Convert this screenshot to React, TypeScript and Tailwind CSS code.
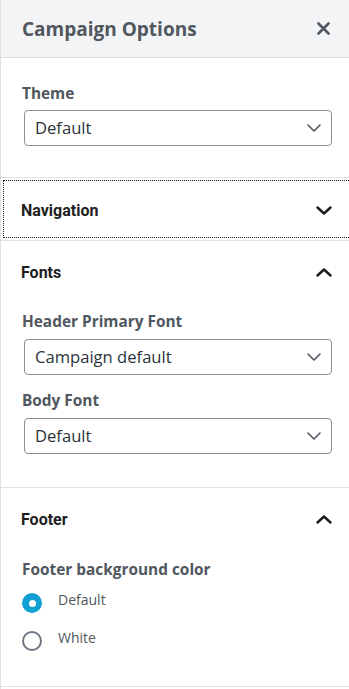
import React from "react";

const sans = { fontFamily: '"Open Sans", "Noto Sans", sans-serif' };
const heading = { fontFamily: 'Roboto, "Liberation Sans", sans-serif' };

function SelectChevron() {
  return (
    <svg width="14" height="8" viewBox="0 0 14 8" fill="none" className="shrink-0">
      <path d="M1 1l6 6 6-6" stroke="#50575e" strokeWidth="1.6" strokeLinecap="round" strokeLinejoin="round" />
    </svg>
  );
}

function Chevron({ up }: { up?: boolean }) {
  return (
    <svg width="16" height="9" viewBox="0 0 16 9" fill="none" className="shrink-0">
      <path
        d={up ? "M1.5 7.5l6.5-6 6.5 6" : "M1.5 1.5l6.5 6 6.5-6"}
        stroke="#1e1e1e"
        strokeWidth="2.4"
        strokeLinecap="round"
        strokeLinejoin="round"
      />
    </svg>
  );
}

function Select({ value }: { value: string }) {
  return (
    <div className="ml-[2px] flex h-[36px] w-[308px] items-center justify-between rounded-[4px] border border-[#8c8f94] bg-white pl-[10px] pr-[10px]">
      <span className="text-[16.6px] leading-[20px] text-[#2c3338]" style={sans}>
        {value}
      </span>
      <SelectChevron />
    </div>
  );
}

function Label({ children }: { children: React.ReactNode }) {
  return (
    <div className="h-[20px] text-[15.4px] font-bold leading-[20px] text-[#50575e]" style={sans}>
      {children}
    </div>
  );
}

function Radio({ checked, label }: { checked?: boolean; label: string }) {
  return (
    <div className="flex h-[20px] items-center">
      {checked ? (
        <div className="flex h-[20px] w-[20px] items-center justify-center rounded-full bg-[#11a0d2]">
          <div className="h-[7px] w-[7px] rounded-full bg-white" />
        </div>
      ) : (
        <div className="h-[20px] w-[20px] rounded-full border-[2.5px] border-[#6c7781] bg-white" />
      )}
      <span className="ml-[16px] -mt-[6px] text-[14px] leading-[20px] text-[#50575e]" style={sans}>
        {label}
      </span>
    </div>
  );
}

export default function App() {
  return (
    <div className="h-[689px] w-[349px] overflow-hidden border-l border-[#e0e0e0] bg-white">
      {/* Header */}
      <div className="flex h-[58px] items-center justify-between border-b border-[#e0e0e0] bg-[#f3f4f5] pl-[21px] pr-[19px]">
        <span className="text-[19px] font-bold leading-[24px] text-[#50575e]" style={sans}>
          Campaign Options
        </span>
        <svg width="13" height="13" viewBox="0 0 13 13" fill="none">
          <path d="M1.5 1.5l10 10M11.5 1.5l-10 10" stroke="#50575e" strokeWidth="2.6" strokeLinecap="round" />
        </svg>
      </div>

      {/* Theme */}
      <div className="border-b border-[#e0e0e0] pb-[31px] pl-[21px] pt-[26px]">
        <Label>Theme</Label>
        <div className="mt-[6px]">
          <Select value="Default" />
        </div>
      </div>

      {/* Navigation (focused) */}
      <div className="border-b border-[#e0e0e0]">
        <button
          className="flex h-[62px] w-[calc(100%+8px)] items-center justify-between pl-[20px] pr-[25px] outline-1 outline-offset-[-3px] outline-dotted outline-[#1e1e1e]"
        >
          <span className="pt-[3px] text-[16px] font-bold text-[#1e1e1e]" style={heading}>
            Navigation
          </span>
          <span className="pt-[2px]">
            <Chevron />
          </span>
        </button>
      </div>

      {/* Fonts */}
      <div className="border-b border-[#e0e0e0] pb-[33px]">
        <div className="flex h-[62px] items-center justify-between pl-[20px] pr-[17px]">
          <span className="pt-[1px] text-[16px] font-bold text-[#1e1e1e]" style={heading}>
            Fonts
          </span>
          <Chevron up />
        </div>
        <div className="pl-[21px] pt-[9px]">
          <Label>Header Primary Font</Label>
          <div className="mt-[7px]">
            <Select value="Campaign default" />
          </div>
          <div className="mt-[16px]">
            <Label>Body Font</Label>
          </div>
          <div className="mt-[7px]">
            <Select value="Default" />
          </div>
        </div>
      </div>

      {/* Footer */}
      <div className="h-[199px] border-b border-[#e0e0e0]">
        <div className="flex h-[62px] items-center justify-between pl-[20px] pr-[17px]">
          <span className="pt-[1px] text-[16px] font-bold text-[#1e1e1e]" style={heading}>
            Footer
          </span>
          <Chevron up />
        </div>
        <div className="pl-[21px] pt-[10px]">
          <Label>Footer background color</Label>
          <div className="mt-[13px]">
            <Radio checked label="Default" />
          </div>
          <div className="mt-[18px]">
            <Radio label="White" />
          </div>
        </div>
      </div>
    </div>
  );
}
